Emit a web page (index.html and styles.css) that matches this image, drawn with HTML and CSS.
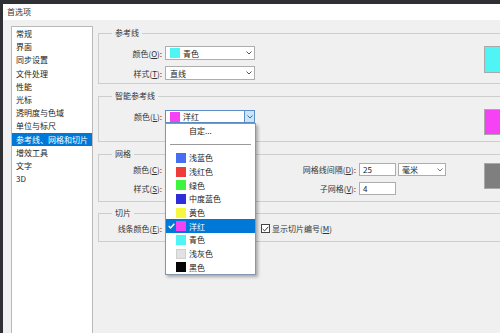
FILE: index.html
```html
<!DOCTYPE html>
<html lang="zh-CN">
<head>
<meta charset="utf-8">
<title>首选项</title>
<link rel="stylesheet" href="styles.css">
</head>
<body>
<div class="window">
  <div class="titlebar">首选项</div>
  <div class="main">
    <ul class="nav">
      <li>常规</li>
      <li>界面</li>
      <li>同步设置</li>
      <li>文件处理</li>
      <li>性能</li>
      <li>光标</li>
      <li>透明度与色域</li>
      <li>单位与标尺</li>
      <li class="sel">参考线、网格和切片</li>
      <li>增效工具</li>
      <li>文字</li>
      <li>3D</li>
    </ul>
    <div class="panel">
      <fieldset class="group g1">
        <legend>参考线</legend>
        <div class="inner">
          <div class="form">
            <div class="lbl">颜色(<u>O</u>):</div>
            <div class="select"><span class="sw c-cyan"></span><span class="val">青色</span><span class="arrow"><svg width="6" height="4" viewBox="0 0 6 4"><polyline points="0.5,0.5 3,3 5.5,0.5" fill="none" stroke="#555" stroke-width="1"/></svg></span></div>
            <div class="lbl">样式(<u>T</u>):</div>
            <div class="select"><span class="val">直线</span><span class="arrow"><svg width="6" height="4" viewBox="0 0 6 4"><polyline points="0.5,0.5 3,3 5.5,0.5" fill="none" stroke="#555" stroke-width="1"/></svg></span></div>
          </div>
          <div class="bigsw c-cyan tall"></div>
        </div>
      </fieldset>

      <fieldset class="group g2">
        <legend>智能参考线</legend>
        <div class="inner">
          <div class="form single">
            <div class="lbl">颜色(<u>L</u>):</div>
            <div class="select open"><span class="sw c-magenta"></span><span class="val">洋红</span><span class="arrow"><svg width="6" height="4" viewBox="0 0 6 4"><polyline points="0.5,0.5 3,3 5.5,0.5" fill="none" stroke="#3a6ea5" stroke-width="1"/></svg></span>
              <div class="popup">
                <div class="custom">自定...</div>
                <div class="sep"></div>
                <div class="opt"><span class="ck"></span><span class="sw c-lblue"></span>浅蓝色</div>
                <div class="opt"><span class="ck"></span><span class="sw c-lred"></span>浅红色</div>
                <div class="opt"><span class="ck"></span><span class="sw c-green"></span>绿色</div>
                <div class="opt"><span class="ck"></span><span class="sw c-mblue"></span>中度蓝色</div>
                <div class="opt"><span class="ck"></span><span class="sw c-yellow"></span>黄色</div>
                <div class="opt sel"><span class="ck"><svg width="7" height="6" viewBox="0 0 7 6"><polyline points="0.7,3 2.6,4.9 6.3,0.8" fill="none" stroke="#fff" stroke-width="1.4"/></svg></span><span class="sw c-magenta"></span>洋红</div>
                <div class="opt"><span class="ck"></span><span class="sw c-cyan"></span>青色</div>
                <div class="opt"><span class="ck"></span><span class="sw c-lgray"></span>浅灰色</div>
                <div class="opt"><span class="ck"></span><span class="sw c-black"></span>黑色</div>
              </div>
            </div>
          </div>
          <div class="bigsw c-magenta"></div>
        </div>
      </fieldset>

      <fieldset class="group g3">
        <legend>网格</legend>
        <div class="inner">
          <div class="form grid5">
            <div class="lbl">颜色(<u>C</u>):</div>
            <div class="select"><span class="sw c-gray"></span><span class="arrow"></span></div>
            <div class="lbl">网格线间隔(<u>D</u>):</div>
            <div class="input">25</div>
            <div class="select unit"><span class="val">毫米</span><span class="arrow"><svg width="6" height="4" viewBox="0 0 6 4"><polyline points="0.5,0.5 3,3 5.5,0.5" fill="none" stroke="#777" stroke-width="1"/></svg></span></div>
            <div class="lbl">样式(<u>S</u>):</div>
            <div class="select"><span class="arrow"></span></div>
            <div class="lbl">子网格(<u>V</u>):</div>
            <div class="input">4</div>
            <div></div>
          </div>
          <div class="bigsw c-gray"></div>
        </div>
      </fieldset>

      <fieldset class="group g4">
        <legend>切片</legend>
        <div class="inner">
          <div class="form grid3">
            <div class="lbl">线条颜色(<u>E</u>):</div>
            <div class="select"><span class="sw c-lblue"></span><span class="arrow"></span></div>
            <div class="check"><span class="cb"><svg width="7" height="6" viewBox="0 0 7 6"><polyline points="0.7,3 2.6,4.9 6.3,0.8" fill="none" stroke="#333" stroke-width="1"/></svg></span>显示切片编号(<u>M</u>)</div>
          </div>
        </div>
      </fieldset>
    </div>
  </div>
</div>
</body>
</html>
```

FILE: styles.css
```css
* { box-sizing: border-box; }
html, body { margin: 0; padding: 0; }
body {
  width: 500px;
  height: 333px;
  overflow: hidden;
  background: #2f3033;
  font-family: "Noto Sans CJK SC", "Noto Sans", sans-serif;
  font-size: 8px;
  color: #222;
}
u { text-decoration: underline; text-underline-offset: 1px; }

.window {
  margin: 4px 0 0 3px;
  height: 329px;
  background: #f0f0f0;
  display: flex;
  flex-direction: column;
  overflow: hidden;
}
.titlebar {
  flex: none;
  height: 16px;
  line-height: 16px;
  background: #fff;
  padding-left: 4px;
  color: #333;
}
.main {
  flex: 1;
  min-height: 0;
  display: flex;
  padding-top: 6px;
}

/* left list */
.nav {
  flex: none;
  list-style: none;
  margin: 0 0 0 8px;
  padding: 0;
  width: 82px;
  background: #fff;
  border: 1px solid #b9b9b9;
  border-bottom: none;
}
.nav li {
  height: 13.2px;
  line-height: 13.2px;
  padding-left: 4px;
  white-space: nowrap;
  overflow: hidden;
}
.nav li.sel { background: #0078d7; color: #fff; }

/* right panel (continues past the window edge, so its right side is cut) */
.panel {
  flex: none;
  width: 402px;
  margin-left: 5px;
  padding-top: 1px;
}
.group {
  margin: 0;
  padding: 0;
  min-width: 0;
  border: 1px solid #cdcdcd;
  border-right: none;
}
.group legend {
  margin-left: 13px;
  padding: 0 3px;
  height: 12px;
  line-height: 12px;
  color: #333;
}
.g1 { padding: 7px 0 3px; }
.g2 { margin-top: 6px; padding: 7px 0 6px; }
.g3 { margin-top: 6px; padding: 3px 0 6px; }
.g4 { margin-top: 5px; padding: 3px 0 6px; }

.inner {
  display: flex;
  justify-content: space-between;
  align-items: flex-start;
}
.form {
  display: grid;
  grid-template-columns: 66px 90px;
  grid-auto-rows: 14px;
  row-gap: 6px;
  align-items: center;
}
.form.single { margin-top: 1px; grid-auto-rows: 13px; }
.form.grid5 {
  grid-template-columns: 66px 90px 104px 39px 48px;
  grid-auto-rows: 13px;
}
.form.grid3 {
  grid-template-columns: 66px 90px auto;
  grid-auto-rows: 13px;
}
.lbl {
  text-align: right;
  padding-right: 3px;
  white-space: nowrap;
  color: #333;
}

.select {
  position: relative;
  height: 100%;
  background: #fff;
  border: 1px solid #adadad;
  display: flex;
  align-items: center;
  padding-left: 4px;
}
.select .val { white-space: nowrap; }
.select .arrow {
  margin-left: auto;
  width: 10px;
  height: 100%;
  display: flex;
  align-items: center;
  justify-content: center;
}
.select.open { border-color: #5b8fc9; }
.select.open .arrow {
  background: #cce4f7;
  border-left: 1px solid #5b8fc9;
}
.select.unit { padding-left: 3px; }

.sw {
  flex: none;
  width: 10px;
  height: 10px;
  margin-right: 3px;
}
.bigsw {
  flex: none;
  width: 16px;
  height: 26px;
  border: 1px solid #a9a9a9;
  border-right: none;
}
.bigsw.tall { height: 27px; }

.c-cyan { background: #4ff5f5; }
.c-magenta { background: #f442f4; }
.c-gray { background: #7f7f7f; }
.c-lblue { background: #476ef2; }
.c-lred { background: #f03b3b; }
.c-green { background: #3ef53e; }
.c-mblue { background: #2d2ddc; }
.c-yellow { background: #f7f740; }
.c-lgray { background: #e2e2e2; }
.c-black { background: #050505; }

.input {
  width: 37px;
  height: 100%;
  background: #fff;
  border: 1px solid #adadad;
  padding-left: 3px;
  line-height: 11px;
}

.check {
  display: flex;
  align-items: center;
  margin-left: 6px;
  white-space: nowrap;
  color: #333;
}
.cb {
  width: 9px;
  height: 9px;
  border: 1px solid #444;
  background: #fff;
  margin-right: 2px;
  display: flex;
  align-items: center;
  justify-content: center;
}

/* dropdown popup */
.popup {
  position: absolute;
  left: -1px;
  top: 12px;
  width: 91px;
  background: #fff;
  border: 1px solid #8497b0;
  box-shadow: 2px 2px 3px rgba(0, 0, 0, 0.3);
  z-index: 5;
  color: #222;
}
.popup .custom {
  height: 14px;
  line-height: 14px;
  padding-left: 23px;
}
.popup .sep {
  height: 13px;
  display: flex;
  align-items: center;
  padding: 0 4px;
}
.popup .sep::after {
  content: "";
  flex: 1;
  border-top: 1px solid #9a9a9a;
}
.popup .opt {
  height: 13.7px;
  display: flex;
  align-items: center;
  white-space: nowrap;
}
.popup .opt.sel { background: #0078d7; color: #fff; }
.popup .ck {
  flex: none;
  width: 10px;
  display: flex;
  justify-content: center;
}
.popup .c-lgray { border: 1px solid #d0d0d0; }
```
